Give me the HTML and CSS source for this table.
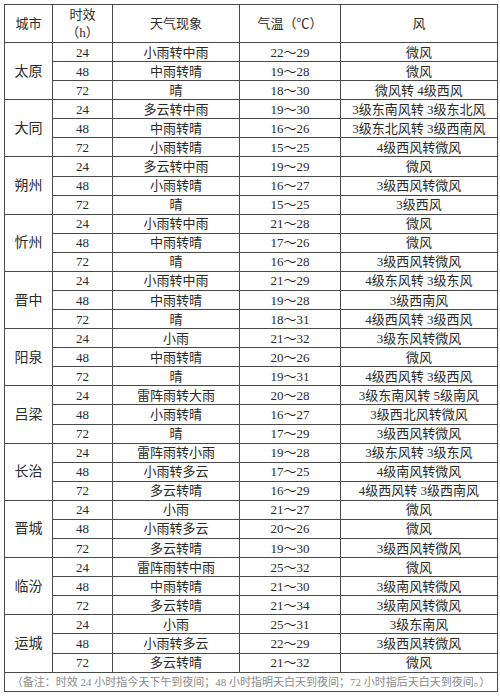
FILE: index.html
```html
<!DOCTYPE html>
<html lang="zh">
<head>
<meta charset="utf-8">
<title>山西天气预报</title>
<link rel="stylesheet" href="styles.css">
</head>
<body>
<table class="wx">
<colgroup>
<col class="c-city"><col class="c-time"><col class="c-wx"><col class="c-temp"><col class="c-wind">
</colgroup>
<thead>
<tr class="head"><th>城市</th><th>时效<br>（h）</th><th>天气现象</th><th>气温（℃）</th><th>风</th></tr>
</thead>
<tbody>
<tr><td rowspan="3" class="city">太原</td><td>24</td><td>小雨转中雨</td><td>22～29</td><td>微风</td></tr>
<tr><td>48</td><td>中雨转晴</td><td>19～28</td><td>微风</td></tr>
<tr><td>72</td><td>晴</td><td>18～30</td><td>微风转 4级西风</td></tr>

<tr><td rowspan="3" class="city">大同</td><td>24</td><td>多云转中雨</td><td>19～30</td><td>3级东南风转 3级东北风</td></tr>
<tr><td>48</td><td>中雨转晴</td><td>16～26</td><td>3级东北风转 3级西南风</td></tr>
<tr><td>72</td><td>小雨转晴</td><td>15～25</td><td>4级西风转微风</td></tr>

<tr><td rowspan="3" class="city">朔州</td><td>24</td><td>多云转中雨</td><td>19～29</td><td>微风</td></tr>
<tr><td>48</td><td>小雨转晴</td><td>16～27</td><td>3级西风转微风</td></tr>
<tr><td>72</td><td>晴</td><td>15～25</td><td>3级西风</td></tr>

<tr><td rowspan="3" class="city">忻州</td><td>24</td><td>小雨转中雨</td><td>21～28</td><td>微风</td></tr>
<tr><td>48</td><td>中雨转晴</td><td>17～26</td><td>微风</td></tr>
<tr><td>72</td><td>晴</td><td>16～28</td><td>3级西风转微风</td></tr>

<tr><td rowspan="3" class="city">晋中</td><td>24</td><td>小雨转中雨</td><td>21～29</td><td>4级东风转 3级东风</td></tr>
<tr><td>48</td><td>中雨转晴</td><td>19～28</td><td>3级西南风</td></tr>
<tr><td>72</td><td>晴</td><td>18～31</td><td>4级西风转 3级西风</td></tr>

<tr><td rowspan="3" class="city">阳泉</td><td>24</td><td>小雨</td><td>21～32</td><td>3级东风转微风</td></tr>
<tr><td>48</td><td>中雨转晴</td><td>20～26</td><td>微风</td></tr>
<tr><td>72</td><td>晴</td><td>19～31</td><td>4级西风转 3级西风</td></tr>

<tr><td rowspan="3" class="city">吕梁</td><td>24</td><td>雷阵雨转大雨</td><td>20～28</td><td>3级东南风转 5级南风</td></tr>
<tr><td>48</td><td>小雨转晴</td><td>16～27</td><td>3级西北风转微风</td></tr>
<tr><td>72</td><td>晴</td><td>17～29</td><td>3级西风转微风</td></tr>

<tr><td rowspan="3" class="city">长治</td><td>24</td><td>雷阵雨转小雨</td><td>19～28</td><td>3级东风转 3级东风</td></tr>
<tr><td>48</td><td>小雨转多云</td><td>17～25</td><td>4级南风转微风</td></tr>
<tr><td>72</td><td>多云转晴</td><td>16～29</td><td>4级西风转 3级西南风</td></tr>

<tr><td rowspan="3" class="city">晋城</td><td>24</td><td>小雨</td><td>21～27</td><td>微风</td></tr>
<tr><td>48</td><td>小雨转多云</td><td>20～26</td><td>微风</td></tr>
<tr><td>72</td><td>多云转晴</td><td>19～30</td><td>3级西风转微风</td></tr>

<tr><td rowspan="3" class="city">临汾</td><td>24</td><td>雷阵雨转中雨</td><td>25～32</td><td>微风</td></tr>
<tr><td>48</td><td>中雨转晴</td><td>21～30</td><td>3级南风转微风</td></tr>
<tr><td>72</td><td>多云转晴</td><td>21～34</td><td>3级南风转微风</td></tr>

<tr><td rowspan="3" class="city">运城</td><td>24</td><td>小雨</td><td>25～31</td><td>3级东南风</td></tr>
<tr><td>48</td><td>小雨转多云</td><td>22～29</td><td>3级西风转微风</td></tr>
<tr><td>72</td><td>多云转晴</td><td>21～32</td><td>微风</td></tr>
</tbody>
<tfoot>
<tr class="note"><td colspan="5">（备注：时效 24 小时指今天下午到夜间；48 小时指明天白天到夜间；72 小时指后天白天到夜间。）</td></tr>
</tfoot>
</table>
</body>
</html>
```

FILE: styles.css
```css
html, body {
  margin: 0;
  padding: 0;
  background: #fff;
}

.wx {
  margin: 4px 0 0 4px;
  width: 493px;
  table-layout: fixed;
  border-collapse: collapse;
  border: 1px solid #3a3a3a;
  font-family: "Liberation Serif", "Noto Sans CJK SC", serif;
  font-size: 13px;
  color: #2a2a2a;
}

.c-city { width: 48px; }
.c-time { width: 60px; }
.c-wx { width: 127px; }
.c-temp { width: 101px; }
.c-wind { width: 157px; }

.wx th,
.wx td {
  border: 1px solid #4a4a4a;
  padding: 0;
  text-align: center;
  vertical-align: middle;
  font-weight: normal;
  line-height: 17px;
  white-space: nowrap;
}

.wx .head th {
  height: 37px;
  line-height: 18px;
}

.wx tbody tr {
  height: 19.09px;
}

.wx .city {
  font-size: 14px;
}

.wx .note td {
  height: 18px;
  font-size: 11px;
  color: #8a8a8a;
  line-height: 18px;
}
```
